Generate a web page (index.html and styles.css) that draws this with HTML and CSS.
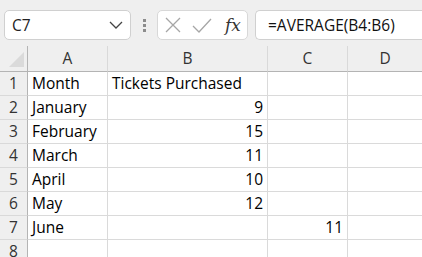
FILE: index.html
```html
<!DOCTYPE html>
<html>
<head>
<meta charset="utf-8">
<link rel="stylesheet" href="styles.css">
</head>
<body>
<div class="app">
  <div class="toolbar">
    <div class="namebox">
      <span class="name">C7</span>
      <svg class="chev" width="14" height="8" viewBox="0 0 14 8"><path d="M1 1 L7 7 L13 1" fill="none" stroke="#444" stroke-width="1.3"/></svg>
    </div>
    <div class="dots"><span></span><span></span><span></span></div>
    <div class="buttons">
      <svg class="btn" width="18" height="18" viewBox="0 0 18 18"><path d="M2 2 L16 16 M16 2 L2 16" stroke="#a6a6a6" stroke-width="1.3" fill="none"/></svg>
      <svg class="btn" width="20" height="18" viewBox="0 0 20 18"><path d="M1 10 L7 16 L19 3" stroke="#a6a6a6" stroke-width="1.3" fill="none"/></svg>
      <span class="fx">fx</span>
    </div>
    <div class="formula">=AVERAGE(B4:B6)</div>
  </div>
  <div class="sheet">
    <div class="corner"><div class="tri"></div></div>
    <div class="colh">A</div>
    <div class="colh">B</div>
    <div class="colh">C</div>
    <div class="colh last">D</div>

    <div class="rowh">1</div><div class="cell">Month</div><div class="cell">Tickets Purchased</div><div class="cell"></div><div class="cell last"></div>
    <div class="rowh">2</div><div class="cell">January</div><div class="cell num">9</div><div class="cell"></div><div class="cell last"></div>
    <div class="rowh">3</div><div class="cell">February</div><div class="cell num">15</div><div class="cell"></div><div class="cell last"></div>
    <div class="rowh">4</div><div class="cell">March</div><div class="cell num">11</div><div class="cell"></div><div class="cell last"></div>
    <div class="rowh">5</div><div class="cell">April</div><div class="cell num">10</div><div class="cell"></div><div class="cell last"></div>
    <div class="rowh">6</div><div class="cell">May</div><div class="cell num">12</div><div class="cell"></div><div class="cell last"></div>
    <div class="rowh">7</div><div class="cell">June</div><div class="cell"></div><div class="cell num">11</div><div class="cell last"></div>
    <div class="rowh">8</div><div class="cell"></div><div class="cell"></div><div class="cell"></div><div class="cell last"></div>
  </div>
</div>
</body>
</html>
```

FILE: styles.css
```css
html, body {
  margin: 0;
  padding: 0;
  background: #ffffff;
  overflow: hidden;
}
.app {
  width: 422px;
  height: 257px;
  overflow: hidden;
  font-family: "Open Sans", "Noto Sans", sans-serif;
  color: #000;
}
.toolbar {
  height: 46px;
  background: #efefef;
  display: flex;
  align-items: flex-start;
  padding-top: 10px;
  box-sizing: border-box;
}
.namebox {
  margin-left: 4px;
  width: 127px;
  height: 30px;
  box-sizing: border-box;
  background: #fff;
  border: 1px solid #d0d0d0;
  border-radius: 5px;
  display: flex;
  align-items: center;
  justify-content: space-between;
  padding: 0 7px 0 7px;
}
.name {
  font-size: 15.5px;
  color: #222;
}
.chev {
  display: block;
}
.dots {
  width: 26px;
  height: 30px;
  display: flex;
  flex-direction: column;
  align-items: center;
  justify-content: center;
  gap: 2px;
}
.dots span {
  width: 3px;
  height: 3px;
  background: #8c8c8c;
}
.buttons {
  width: 91px;
  height: 30px;
  box-sizing: border-box;
  background: #fff;
  border: 1px solid #d8d8d8;
  border-radius: 5px;
  display: flex;
  align-items: center;
  padding-left: 6px;
  gap: 10px;
}
.btn {
  display: block;
}
.fx {
  font-family: "DejaVu Serif", "Liberation Serif", serif;
  font-style: italic;
  font-size: 17px;
  color: #333;
  margin-left: 3px;
}
.formula {
  margin-left: 7px;
  flex: 1;
  height: 30px;
  box-sizing: border-box;
  background: #fff;
  border: 1px solid #d0d0d0;
  border-right: none;
  border-radius: 5px 0 0 5px;
  font-size: 15.5px;
  line-height: 28px;
  padding-left: 12px;
  color: #111;
}
.sheet {
  display: grid;
  grid-template-columns: 28px 80px 160px 80px 1fr;
  grid-template-rows: 26px repeat(8, 24px);
}
.corner, .colh, .rowh {
  background: #efefef;
  box-sizing: border-box;
}
.corner {
  border-right: 1px solid #b4b4b4;
  border-bottom: 1px solid #b4b4b4;
  position: relative;
}
.tri {
  position: absolute;
  right: 3px;
  bottom: 4px;
  width: 0;
  height: 0;
  border-left: 15px solid transparent;
  border-bottom: 15px solid #dadada;
}
.colh {
  border-right: 1px solid #d9d9d9;
  border-bottom: 1px solid #b4b4b4;
  text-align: center;
  font-size: 15.5px;
  line-height: 25px;
  color: #333;
}
.rowh {
  border-right: 1px solid #b4b4b4;
  border-bottom: 1px solid #d9d9d9;
  text-align: center;
  font-size: 15.5px;
  line-height: 23px;
  color: #333;
}
.cell {
  box-sizing: border-box;
  border-right: 1px solid #dadada;
  border-bottom: 1px solid #dadada;
  font-size: 15.5px;
  line-height: 23px;
  padding: 0 4px 0 4px;
  white-space: nowrap;
  overflow: visible;
}
.num {
  text-align: right;
}
.last {
  border-right: none;
}
```
